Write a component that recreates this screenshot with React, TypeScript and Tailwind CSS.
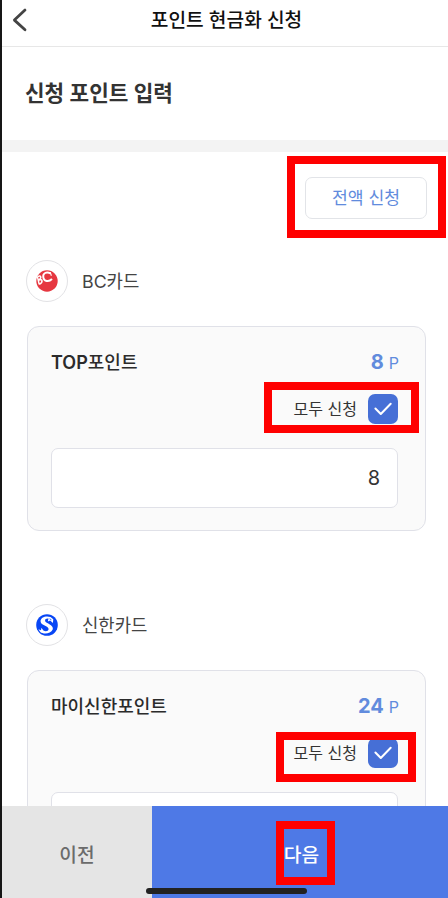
import type { ReactNode } from 'react';

function Highlight({ className }: { className: string }) {
  return <div className={`pointer-events-none absolute z-20 border-8 border-[#ff0000] ${className}`} />;
}

function BcLogo() {
  return (
    <svg width="22" height="22" viewBox="0 0 22 22" fill="none">
      <circle cx="11" cy="11" r="10.7" fill="#e63740" />
      <path d="M1.5 6.8L3.2 14.3M1.4 7.2C4.6 4.4 6.2 7.3 3 10C7 8.4 7 12.8 3.2 14.3" stroke="#fff" strokeWidth="1.5" />
      <path d="M14.5 3.4C10.5 1.3 6.6 3.2 7.3 7.3C8 11.4 12.7 12.4 16 9" stroke="#fff" strokeWidth="1.9" />
      <path d="M14.2 2.3L15.4 5.8" stroke="#fff" strokeWidth="1.1" />
    </svg>
  );
}

function ShinhanLogo() {
  return (
    <svg width="22" height="22" viewBox="0 0 22 22" fill="none">
      <circle cx="11" cy="11" r="10.8" fill="#0846f5" />
      <path
        d="M14.5 3C9.6 1.4 4.4 3.6 4.6 7.4C4.9 11.6 12.6 11.6 12.6 15C12.4 17.4 9.6 17.8 7.4 16.6L5.4 13.8L5 16.2L2.4 15.2L4.3 18C7 20.4 14.8 20.1 16.7 15.6C18.4 10.7 9.8 9.4 9.1 6.9C8.8 5 10.8 4.2 12.5 4.6L11.8 7.6L14.2 6.4L16.9 9L17.3 5.3Z"
        fill="#fff"
      />
      <path d="M13.6 4.8L15.4 5.8" stroke="#0846f5" strokeWidth=".8" />
    </svg>
  );
}

interface PointProps {
  logo: ReactNode;
  company: ReactNode;
  name: ReactNode;
  points: number;
}

function PointSection({ logo, company, name, points }: PointProps) {
  return (
    <section className="h-[344px] shrink-0 pl-6 pr-[22px]">
      <div className="flex h-[42px] items-center gap-[14px]">
        <div className="flex size-[42px] items-center justify-center rounded-full border border-[#e2e2e5] bg-white">
          {logo}
        </div>
        <span className="pt-px text-[17.8px] leading-6 text-[#444]">{company}</span>
      </div>
      <div className="ml-px mt-6 h-[205px] rounded-[12px] border border-[#e0e1e8] bg-[#fafafa] pl-[23px] pr-[27px]">
        <div className="flex h-[68px] items-center justify-between pt-[2px]">
          <span className="text-[18px] font-medium text-[#2b2b2b]">{name}</span>
          <span className="-mr-px flex items-baseline gap-[5px] text-[#618bdd]">
            <b className="text-[20px] font-bold">{points}</b>
            <span className="text-[16px]">P</span>
          </span>
        </div>
        <label className="-mt-px flex h-[30px] items-center justify-end gap-[11px]">
          <span className="text-[16px] text-[#333]">모두 신청</span>
          <span className="flex size-[30px] items-center justify-center rounded-[7px] bg-[#466fd6]">
            <svg width="20" height="16" viewBox="0 0 20 16" fill="none">
              <path d="M2.4 7.5L7.8 13L17.7 2.7" stroke="#fff" strokeWidth="2" strokeLinecap="round" strokeLinejoin="round" />
            </svg>
          </span>
        </label>
        <div className="mt-6 flex h-[60px] items-center justify-end rounded-[7px] border border-[#e0e1e8] bg-white pr-[17px] text-[20px] text-[#333]">
          {points}
        </div>
      </div>
    </section>
  );
}

export default function App() {
  return (
    <main className="relative flex h-[898px] w-[448px] flex-col overflow-hidden border-l-2 border-[#161616] bg-white font-[Inter,'Noto_Sans_CJK_KR',sans-serif]">
      <header className="flex h-[47px] shrink-0 items-center border-b border-[#e7e7e7] pb-[6px] pl-[9px] pr-[26px]">
        <svg width="20" height="26" viewBox="0 0 20 26" fill="none">
          <path d="M14 3.1L3.4 13.1L14 22.8" stroke="#444" strokeWidth="2.8" strokeLinecap="round" strokeLinejoin="round" />
        </svg>
        <h1 className="flex-1 pt-px text-center text-[19.2px] font-medium text-[#111]">포인트 현금화 신청</h1>
      </header>
      <div className="flex h-[93px] shrink-0 items-center pl-[23px] pt-px">
        <h2 className="text-[21.3px] font-semibold text-[#333]">신청 포인트 입력</h2>
      </div>
      <div className="h-3 shrink-0 bg-[#f3f3f3]" />
      <div className="flex h-[108px] shrink-0 items-start justify-end pr-[21px] pt-[25px]">
        <button className="h-[42px] w-[122px] rounded-[7px] border border-[#e2e4e8] text-[17.2px] text-[#618bdd]">전액 신청</button>
      </div>
      <PointSection logo={<BcLogo />} company="BC카드" name={<><span className="font-semibold">TOP</span>포인트</>} points={8} />
      <PointSection logo={<ShinhanLogo />} company="신한카드" name="마이신한포인트" points={24} />

      <footer className="absolute inset-x-0 bottom-0 z-10 flex h-[92px] text-[19.2px]">
        <button className="w-[150px] bg-[#e5e5e5] pt-[7px] font-medium text-[#6b6b6b]">이전</button>
        <button className="flex-1 bg-[#4e79e6] pl-[3px] pt-[7px] font-medium text-white">다음</button>
        <div className="absolute bottom-[4px] left-[144px] h-[6px] w-[161px] rounded-full bg-[#222]" />
      </footer>

      <Highlight className="left-[285px] top-[156px] h-[82px] w-[159px]" />
      <Highlight className="left-[262px] top-[382px] h-[51px] w-[155px]" />
      <Highlight className="left-[274px] top-[732px] h-[50px] w-[140px]" />
      <Highlight className="left-[274px] top-[821px] h-[64px] w-[59px]" />
    </main>
  );
}
